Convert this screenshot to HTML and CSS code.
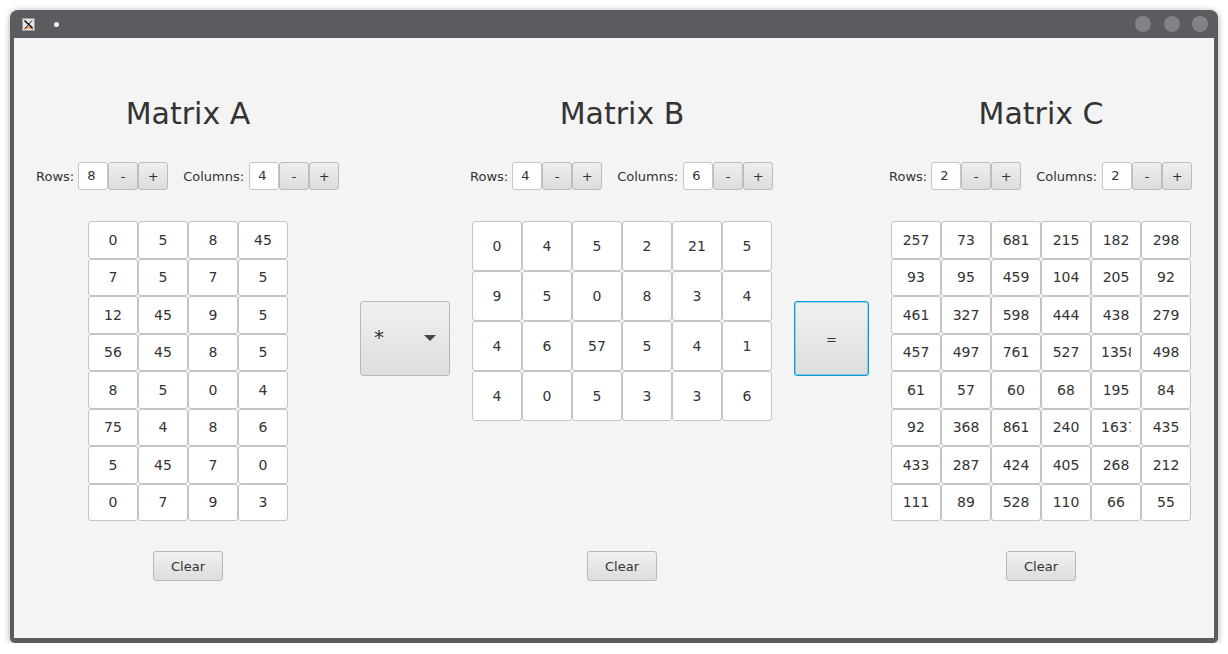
FILE: index.html
```html
<!DOCTYPE html>
<html>
<head>
<meta charset="utf-8">
<title>Matrix Calculator</title>
<link rel="stylesheet" href="styles.css">
</head>
<body>
<div class="window">
  <div class="titlebar">
    <svg class="app-icon" viewBox="0 0 13 13" width="13" height="13">
      <rect x="0.5" y="0.5" width="12" height="12" fill="#e6e6e6" stroke="#9a9a9a"/>
      <path d="M2.5 11 C5 9 8 9 11 11" fill="none" stroke="#e07a2e" stroke-width="1.6"/>
      <path d="M2.5 2.5 L10.5 10" stroke="#111" stroke-width="1.6"/>
      <path d="M10 2.5 L3 10.5" stroke="#111" stroke-width="1"/>
    </svg>
    <span class="title-dot"></span>
    <div class="spacer"></div>
    <span class="wbtn"></span>
    <span class="wbtn"></span>
    <span class="wbtn"></span>
  </div>
  <div class="content">
    <section class="matrix-col">
      <h1 class="matrix-title">Matrix A</h1>
      <div class="dims">
        <span class="dim-label">Rows:</span>
        <div class="spinner"><span class="spin-field">8</span><button class="spin-btn">-</button><button class="spin-btn">+</button></div>
        <span class="dim-label cols-label">Columns:</span>
        <div class="spinner"><span class="spin-field">4</span><button class="spin-btn">-</button><button class="spin-btn">+</button></div>
      </div>
      <div class="grid-area">
        <div class="grid g8x4">
          <div class="cell"><span>0</span></div><div class="cell"><span>5</span></div><div class="cell"><span>8</span></div><div class="cell"><span>45</span></div>
          <div class="cell"><span>7</span></div><div class="cell"><span>5</span></div><div class="cell"><span>7</span></div><div class="cell"><span>5</span></div>
          <div class="cell"><span>12</span></div><div class="cell"><span>45</span></div><div class="cell"><span>9</span></div><div class="cell"><span>5</span></div>
          <div class="cell"><span>56</span></div><div class="cell"><span>45</span></div><div class="cell"><span>8</span></div><div class="cell"><span>5</span></div>
          <div class="cell"><span>8</span></div><div class="cell"><span>5</span></div><div class="cell"><span>0</span></div><div class="cell"><span>4</span></div>
          <div class="cell"><span>75</span></div><div class="cell"><span>4</span></div><div class="cell"><span>8</span></div><div class="cell"><span>6</span></div>
          <div class="cell"><span>5</span></div><div class="cell"><span>45</span></div><div class="cell"><span>7</span></div><div class="cell"><span>0</span></div>
          <div class="cell"><span>0</span></div><div class="cell"><span>7</span></div><div class="cell"><span>9</span></div><div class="cell"><span>3</span></div>
        </div>
      </div>
      <button class="btn clear-btn">Clear</button>
    </section>

    <div class="op-combo">
      <span class="op-value">*</span>
      <span class="op-arrow"></span>
    </div>

    <section class="matrix-col">
      <h1 class="matrix-title">Matrix B</h1>
      <div class="dims">
        <span class="dim-label">Rows:</span>
        <div class="spinner"><span class="spin-field">4</span><button class="spin-btn">-</button><button class="spin-btn">+</button></div>
        <span class="dim-label cols-label">Columns:</span>
        <div class="spinner"><span class="spin-field">6</span><button class="spin-btn">-</button><button class="spin-btn">+</button></div>
      </div>
      <div class="grid-area">
        <div class="grid g4x6">
          <div class="cell"><span>0</span></div><div class="cell"><span>4</span></div><div class="cell"><span>5</span></div><div class="cell"><span>2</span></div><div class="cell"><span>21</span></div><div class="cell"><span>5</span></div>
          <div class="cell"><span>9</span></div><div class="cell"><span>5</span></div><div class="cell"><span>0</span></div><div class="cell"><span>8</span></div><div class="cell"><span>3</span></div><div class="cell"><span>4</span></div>
          <div class="cell"><span>4</span></div><div class="cell"><span>6</span></div><div class="cell"><span>57</span></div><div class="cell"><span>5</span></div><div class="cell"><span>4</span></div><div class="cell"><span>1</span></div>
          <div class="cell"><span>4</span></div><div class="cell"><span>0</span></div><div class="cell"><span>5</span></div><div class="cell"><span>3</span></div><div class="cell"><span>3</span></div><div class="cell"><span>6</span></div>
        </div>
      </div>
      <button class="btn clear-btn">Clear</button>
    </section>

    <button class="btn equals-btn">=</button>

    <section class="matrix-col">
      <h1 class="matrix-title">Matrix C</h1>
      <div class="dims">
        <span class="dim-label">Rows:</span>
        <div class="spinner"><span class="spin-field">2</span><button class="spin-btn">-</button><button class="spin-btn">+</button></div>
        <span class="dim-label cols-label">Columns:</span>
        <div class="spinner"><span class="spin-field">2</span><button class="spin-btn">-</button><button class="spin-btn">+</button></div>
      </div>
      <div class="grid-area">
        <div class="grid g8x6">
          <div class="cell"><span>257</span></div><div class="cell"><span>73</span></div><div class="cell"><span>681</span></div><div class="cell"><span>215</span></div><div class="cell"><span>182</span></div><div class="cell"><span>298</span></div>
          <div class="cell"><span>93</span></div><div class="cell"><span>95</span></div><div class="cell"><span>459</span></div><div class="cell"><span>104</span></div><div class="cell"><span>205</span></div><div class="cell"><span>92</span></div>
          <div class="cell"><span>461</span></div><div class="cell"><span>327</span></div><div class="cell"><span>598</span></div><div class="cell"><span>444</span></div><div class="cell"><span>438</span></div><div class="cell"><span>279</span></div>
          <div class="cell"><span>457</span></div><div class="cell"><span>497</span></div><div class="cell"><span>761</span></div><div class="cell"><span>527</span></div><div class="cell"><span>1358</span></div><div class="cell"><span>498</span></div>
          <div class="cell"><span>61</span></div><div class="cell"><span>57</span></div><div class="cell"><span>60</span></div><div class="cell"><span>68</span></div><div class="cell"><span>195</span></div><div class="cell"><span>84</span></div>
          <div class="cell"><span>92</span></div><div class="cell"><span>368</span></div><div class="cell"><span>861</span></div><div class="cell"><span>240</span></div><div class="cell"><span>1637</span></div><div class="cell"><span>435</span></div>
          <div class="cell"><span>433</span></div><div class="cell"><span>287</span></div><div class="cell"><span>424</span></div><div class="cell"><span>405</span></div><div class="cell"><span>268</span></div><div class="cell"><span>212</span></div>
          <div class="cell"><span>111</span></div><div class="cell"><span>89</span></div><div class="cell"><span>528</span></div><div class="cell"><span>110</span></div><div class="cell"><span>66</span></div><div class="cell"><span>55</span></div>
        </div>
      </div>
      <button class="btn clear-btn">Clear</button>
    </section>
  </div>
</div>
</body>
</html>
```
FILE: styles.css
```css
* { box-sizing: border-box; }
html, body { margin: 0; padding: 0; background: #ffffff; }
body { font-family: "DejaVu Sans", sans-serif; color: #333333; }

.window {
  margin: 10px 0 0 10px;
  width: 1208px;
  height: 633px;
  background: #5b5b60;
  border-radius: 8px 8px 5px 5px;
  box-shadow: 0 1px 6px rgba(0, 0, 0, 0.35);
  padding: 0 4px 5px 4px;
  display: flex;
  flex-direction: column;
}

.titlebar {
  height: 28px;
  display: flex;
  align-items: center;
  padding-right: 6px;
}
.app-icon { margin-left: 8px; display: block; }
.title-dot {
  width: 5px; height: 5px; border-radius: 50%;
  background: #f2f2f2; margin-left: 19px;
}
.spacer { flex: 1; }
.wbtn {
  width: 16px; height: 16px; border-radius: 50%;
  background: #828287; margin-left: 12.5px;
}

.content {
  width: 1200px;
  height: 600px;
  background: #f4f4f4;
  display: flex;
  justify-content: flex-start;
  align-items: flex-start;
  gap: 20px;
  padding-left: 22px;
}

.matrix-col {
  width: 304px;
  display: flex;
  flex-direction: column;
  align-items: center;
  padding-top: 57.5px;
}

.matrix-title {
  margin: 0;
  font-weight: normal;
  font-size: 30px;
  line-height: 36px;
  height: 36px;
  color: #333333;
}

.dims {
  margin-top: 30.5px;
  height: 28px;
  width: 304px;
  display: flex;
  align-items: center;
  font-size: 13px;
}
.dim-label { color: #333333; margin-right: 4px; white-space: nowrap; }
.cols-label { margin-left: 15px; margin-right: 5px; }

.spinner { display: flex; height: 28px; }
.spin-field {
  width: 30px; height: 28px;
  background: #ffffff;
  border: 1px solid #c6c6c6;
  border-radius: 3px;
  padding-left: 8px;
  line-height: 26px;
  font-size: 13px;
  color: #333333;
}
.spin-btn {
  width: 30px; height: 28px;
  margin: 0; padding: 0;
  font-family: "DejaVu Sans", sans-serif;
  font-size: 13px;
  color: #333333;
  border: 1px solid #bcbcbc;
  border-radius: 3px;
  background: linear-gradient(#efefef, #dcdcdc);
}

.grid-area {
  margin-top: 31px;
  height: 300px;
  display: flex;
  justify-content: center;
  align-items: flex-start;
}
.grid { display: grid; }
.g8x4 { grid-template-columns: repeat(4, 50px); grid-template-rows: repeat(8, 37.5px); }
.g4x6 { grid-template-columns: repeat(6, 50px); grid-template-rows: repeat(4, 50px); }
.g8x6 { grid-template-columns: repeat(6, 50px); grid-template-rows: repeat(8, 37.5px); }

.cell {
  background: #ffffff;
  border: 1px solid #c4c4c4;
  border-radius: 3px;
  padding: 0 9px;
  display: flex;
  align-items: center;
  font-size: 14px;
  color: #333333;
}
.cell span {
  display: block;
  width: 100%;
  overflow: hidden;
  white-space: nowrap;
  text-align: center;
}

.btn {
  font-family: "DejaVu Sans", sans-serif;
  font-size: 13px;
  color: #333333;
  border: 1px solid #b8b8b8;
  border-radius: 3px;
  background: linear-gradient(#f1f1f1, #dddddd);
  margin: 0; padding: 0;
}
.clear-btn { margin-top: 30px; width: 70px; height: 30px; }

.op-combo {
  align-self: center;
  width: 90px; height: 75px;
  border: 1px solid #b8b8b8;
  border-radius: 3px;
  background: linear-gradient(#f1f1f1, #dddddd);
  display: flex;
  align-items: center;
  justify-content: space-between;
  padding: 0 13px 0 13px;
}
.op-value { font-size: 20px; color: #333333; margin-top: -2px; }
.op-arrow {
  width: 0; height: 0;
  border-left: 6.5px solid transparent;
  border-right: 6.5px solid transparent;
  border-top: 6.5px solid #444444;
}

.equals-btn {
  align-self: center;
  width: 75px; height: 75px;
  border: 1px solid #039ed3;
  box-shadow: inset 0 0 0 1px rgba(3, 158, 211, 0.35);
  padding-top: 2px;
}
```
